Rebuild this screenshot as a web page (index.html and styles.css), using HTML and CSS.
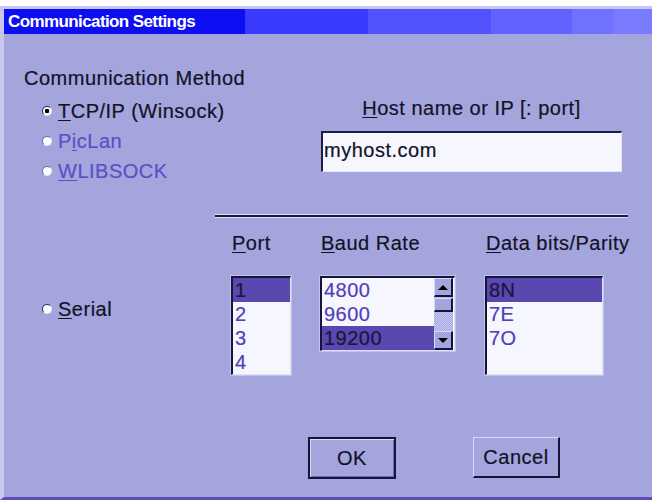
FILE: index.html
```html
<!DOCTYPE html>
<html lang="en">
<head>
<meta charset="utf-8">
<title>Communication Settings</title>
<link rel="stylesheet" href="styles.css">
</head>
<body>
<div class="window">
  <div class="titlebar"><span class="title">Communication Settings</span></div>
  <div class="content">
    <div class="top">
      <div class="method">
        <div class="heading">Communication Method</div>
        <div class="radio-list">
          <div class="radio"><span class="dot checked"></span><span><u>T</u>CP/IP (Winsock)</span></div>
          <div class="radio disabled"><span class="dot"></span><span>P<u>i</u>cLan</span></div>
          <div class="radio disabled"><span class="dot"></span><span><u>W</u>LIBSOCK</span></div>
        </div>
      </div>
      <div class="host">
        <div class="host-label"><u>H</u>ost name or IP [: port]</div>
        <div class="field">myhost.com</div>
      </div>
    </div>

    <div class="rule"></div>

    <div class="lower">
      <div class="serial-col">
        <div class="radio"><span class="dot"></span><span><u>S</u>erial</span></div>
      </div>
      <div class="col col-port">
        <div class="col-label"><u>P</u>ort</div>
        <ul class="list list-tall">
          <li class="selected">1</li>
          <li>2</li>
          <li>3</li>
          <li>4</li>
        </ul>
      </div>
      <div class="col col-baud">
        <div class="col-label"><u>B</u>aud Rate</div>
        <div class="list list-short">
          <ul class="items">
            <li>4800</li>
            <li>9600</li>
            <li class="selected">19200</li>
          </ul>
          <div class="scrollbar">
            <div class="sb-btn"><span class="arrow up"></span></div>
            <div class="sb-track"><div class="sb-thumb"></div></div>
            <div class="sb-btn"><span class="arrow down"></span></div>
          </div>
        </div>
      </div>
      <div class="col col-data">
        <div class="col-label"><u>D</u>ata bits/Parity</div>
        <ul class="list list-tall">
          <li class="selected">8N</li>
          <li>7E</li>
          <li>7O</li>
        </ul>
      </div>
    </div>

    <div class="buttons">
      <div class="btn btn-default">OK</div>
      <div class="btn btn-cancel">Cancel</div>
    </div>
  </div>
</div>
</body>
</html>
```
FILE: styles.css
```css
html {
  background: #ffffff;
}

body {
  margin: 0;
  font-family: "Liberation Sans", Arial, sans-serif;
  font-size: 20px;
  letter-spacing: 0.5px;
  color: #121228;
  -webkit-text-stroke: 0.2px currentColor;
}

u {
  text-decoration-thickness: 1px;
  text-underline-offset: 2px;
}

/* dialog frame */
.window {
  margin-top: 6px;
  height: 494px;
  box-sizing: border-box;
  background: #a5a5dd;
  border-top: 3px solid #c6c6ee;
  border-left: 4px solid #c6c6ee;
  border-bottom: 3px solid #5a50b4;
  display: flex;
  flex-direction: column;
}

.titlebar {
  height: 25px;
  line-height: 25px;
  padding-left: 4px;
  color: #ffffff;
  font-weight: bold;
  font-size: 17px;
  letter-spacing: -0.6px;
  -webkit-text-stroke: 0;
  background: linear-gradient(to right,
    #0e0ef2 0 241px,
    #3a3aff 241px 364px,
    #5252ff 364px 487px,
    #6262ff 487px 568px,
    #7171ff 568px 609px,
    #7a7aff 609px);
}

.content {
  padding-left: 20px;
}

/* top section: method radios and host field */
.top {
  display: flex;
}

.method {
  width: 297px;
  padding-top: 33px;
}

.heading {
  line-height: 22px;
  white-space: nowrap;
}

.radio-list {
  margin-top: 7px;
  padding-left: 18px;
}

.radio {
  display: flex;
  align-items: center;
  gap: 6px;
  height: 30px;
  white-space: nowrap;
}

.radio.disabled {
  color: #5a4fc6;
}

.dot {
  width: 10px;
  height: 10px;
  box-sizing: border-box;
  border-radius: 50%;
  background: #ffffff;
  border: 1px solid;
  border-color: #2a2a6a #e8e8ff #e8e8ff #2a2a6a;
  flex: none;
}

.dot.checked {
  background: radial-gradient(circle, #000000 0 2px, #ffffff 2.6px);
}

.disabled .dot {
  border-color: #6a6ab0 #e8e8ff #e8e8ff #6a6ab0;
}

.host {
  width: 301px;
  padding-top: 63px;
}

.host-label {
  text-align: center;
  line-height: 22px;
  white-space: nowrap;
}

.field {
  margin-top: 12px;
  height: 41px;
  box-sizing: border-box;
  background: #f6f6ff;
  border-top: 2px solid #1c1c48;
  border-left: 2px solid #1c1c48;
  border-right: 1px solid #e6e6fb;
  border-bottom: 1px solid #e6e6fb;
  padding-left: 1px;
  line-height: 34px;
}

/* etched divider */
.rule {
  margin: 29px 0 0 191px;
  width: 413px;
  height: 2px;
  background: #1a1a40;
  box-shadow: 0 1px #dcdcf8, 0 -1px #dcdcf8;
}

/* serial options */
.lower {
  display: flex;
  margin-top: 15px;
}

.serial-col {
  width: 207px;
  box-sizing: border-box;
  padding: 62px 0 0 18px;
}

.col-label {
  line-height: 22px;
  padding-left: 1px;
  white-space: nowrap;
}

.col-port {
  width: 60px;
  margin-right: 29px;
}

.col-baud {
  width: 135px;
  margin-right: 30px;
}

.col-data {
  width: 118px;
}

.list {
  margin: 22px 0 0;
  padding: 0;
  list-style: none;
  box-sizing: border-box;
  background: #f6f6ff;
  border-top: 2px solid #15153a;
  border-left: 2px solid #15153a;
  border-right: 1px solid #e0e0fa;
  border-bottom: 1px solid #e0e0fa;
  box-shadow: 0 0 0 1px #c2c2ec;
  color: #5040b8;
}

.list-tall {
  height: 99px;
}

.list-short {
  height: 75px;
  display: flex;
}

.items {
  flex: 1;
  margin: 0;
  padding: 0;
  list-style: none;
}

.list li {
  height: 24px;
  line-height: 24px;
  padding-left: 2px;
}

.list li.selected {
  background: #5848b0;
  color: #1c1636;
}

/* list scrollbar */
.scrollbar {
  width: 19px;
  margin-right: 1px;
  display: flex;
  flex-direction: column;
}

.sb-btn {
  height: 19px;
  box-sizing: border-box;
  background: #a5a5dd;
  border-top: 1px solid #dadaf8;
  border-left: 1px solid #dadaf8;
  border-right: 2px solid #15153a;
  border-bottom: 2px solid #15153a;
  display: flex;
  align-items: center;
  justify-content: center;
}

.arrow {
  width: 0;
  height: 0;
  border-left: 5px solid transparent;
  border-right: 5px solid transparent;
}

.arrow.up {
  border-bottom: 5px solid #000000;
}

.arrow.down {
  border-top: 5px solid #000000;
}

.sb-track {
  flex: 1;
  background: repeating-conic-gradient(#cacaf2 0 25%, #a5a5dd 0 50%) 0 0 / 2px 2px;
  padding-top: 1px;
}

.sb-thumb {
  height: 14px;
  box-sizing: border-box;
  background: #a5a5dd;
  border-top: 1px solid #dadaf8;
  border-left: 1px solid #dadaf8;
  border-right: 2px solid #15153a;
  border-bottom: 2px solid #15153a;
}

/* dialog buttons */
.buttons {
  display: flex;
  align-items: flex-start;
  gap: 77px;
  margin: 62px 0 0 284px;
}

.btn {
  box-sizing: border-box;
  display: flex;
  align-items: center;
  justify-content: center;
  background: #a5a5dd;
}

.btn-default {
  width: 88px;
  height: 42px;
  border: 2px solid #15153a;
  box-shadow: inset 1px 1px #dadaf8, inset -1px -1px #6a6ab8;
}

.btn-cancel {
  width: 87px;
  height: 41px;
  border-top: 1px solid #dadaf8;
  border-left: 1px solid #dadaf8;
  border-right: 2px solid #15153a;
  border-bottom: 2px solid #15153a;
}
```
